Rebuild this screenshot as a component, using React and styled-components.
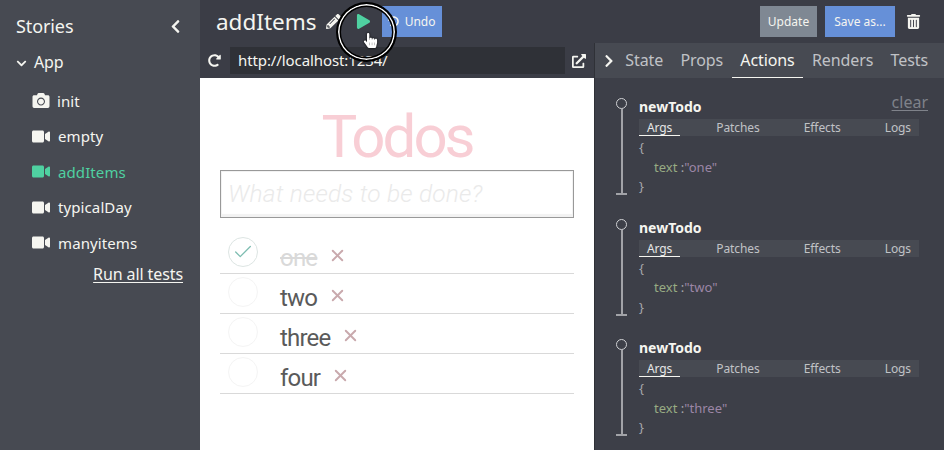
import React from 'react'
import styled, { createGlobalStyle } from 'styled-components'
import {
  FaCamera, FaVideo, FaChevronLeft, FaChevronRight, FaChevronDown, FaPlay,
  FaPencilAlt, FaUndo, FaRedoAlt, FaExternalLinkAlt, FaTrashAlt, FaHandPointer,
} from 'react-icons/fa'
import { Check, X } from 'lucide-react'

const GlobalStyle = createGlobalStyle`
  html, body { margin: 0; padding: 0; height: 100%; overflow: hidden; }
  body { font-family: "Noto Sans", "Open Sans", sans-serif; background: #3d3f48; }
  * { box-sizing: border-box; }
`

const Page = styled.div`
  position: relative;
  display: flex;
  width: 944px;
  height: 450px;
  overflow: hidden;
`

const Sidebar = styled.aside`
  flex: 0 0 200px;
  background: #474a52;
  color: #f5f5f0;
  padding: 13px 17px 0 16px;
`

const SideHead = styled.div`
  display: flex;
  justify-content: space-between;
  align-items: center;
  height: 26px;
  font-size: 18px;
  letter-spacing: -0.1px;
`

const TreeRoot = styled.div`
  display: flex;
  align-items: center;
  gap: 7px;
  margin-top: 10px;
  height: 26px;
  font-size: 16px;
  letter-spacing: -0.2px;
  svg { font-size: 11px; margin-top: 3px; }
`

const StoryList = styled.ul`
  list-style: none;
  margin: 8px 0 0;
  padding: 0 0 0 16px;
`

const Story = styled.li`
  display: flex;
  align-items: center;
  gap: ${p => (p.$photo ? '7px' : '8px')};
  height: 35.5px;
  font-size: 15px;
  letter-spacing: 0.1px;
  color: ${p => (p.$active ? '#4fd1a1' : '#f5f5f0')};
  svg { font-size: 17px; width: 18px; }
`

const RunAll = styled.a`
  display: block;
  text-align: right;
  font-size: 16px;
  letter-spacing: -0.1px;
  line-height: 18px;
  text-decoration: underline;
  text-underline-offset: 2px;
  margin-top: 4px;
`

const Main = styled.main`
  flex: 1;
  display: flex;
  flex-direction: column;
  min-width: 0;
`

const TopBar = styled.header`
  flex: 0 0 43px;
  display: flex;
  align-items: center;
  padding: 0 23px 0 16px;
  background: #3b3d46;
  color: #f5f5f0;
`

const Title = styled.h1`
  margin: 0 9px 0 0;
  font-size: 22.5px;
  font-weight: 400;
`

const IconSlot = styled.span`
  display: flex;
  align-items: center;
  justify-content: center;
  color: ${p => p.$color || '#f5f5f0'};
  font-size: ${p => p.$size || 14}px;
  margin: ${p => p.$margin || 0};
`

const Button = styled.button`
  display: flex;
  align-items: center;
  justify-content: center;
  gap: 6px;
  width: ${p => p.$width}px;
  height: 31px;
  margin-left: ${p => p.$gap || 0}px;
  border: 0;
  padding: 0;
  font: inherit;
  font-size: 12px;
  color: #f5f5f0;
  background: ${p => p.$bg};
`

const Spacer = styled.div`
  flex: 1;
`

const Workspace = styled.div`
  flex: 1;
  display: flex;
  min-height: 0;
`

const PreviewColumn = styled.section`
  flex: 0 0 394px;
  display: flex;
  flex-direction: column;
`

const AddressBar = styled.div`
  flex: 0 0 35px;
  display: flex;
  align-items: center;
  padding: 0 8px;
  background: #3b3d46;
  color: #f5f5f0;
`

const UrlField = styled.div`
  flex: 1;
  height: 27px;
  margin: 0 7px 0 9px;
  padding: 0 8px;
  line-height: 27px;
  font-size: 15px;
  letter-spacing: -0.1px;
  background: #2f3137;
`

const Preview = styled.div`
  flex: 1;
  background: #fff;
  padding: 26px 20px 0;
`

const TodoTitle = styled.h2`
  margin: 0;
  text-align: center;
  font-family: Roboto, sans-serif;
  font-weight: 400;
  font-size: 60px;
  letter-spacing: -3px;
  line-height: 66px;
  color: #f8ced5;
`

const TodoInput = styled.div`
  height: 48px;
  margin-bottom: 16px;
  padding: 0 7px;
  border: 1px solid #999;
  box-shadow: inset 0 -3px 1px #f2f2f2, inset 0 0 0 1px #f2f2f2;
  line-height: 46px;
  font-family: Roboto, sans-serif;
  font-style: italic;
  font-weight: 300;
  font-size: 24.5px;
  letter-spacing: 0.2px;
  color: #eaeaea;
`

const TodoRow = styled.div`
  display: flex;
  align-items: center;
  height: 40px;
  padding-left: 8px;
  border-bottom: 1px solid #d9d9d9;
  font-family: Roboto, sans-serif;
  font-size: 24px;
  letter-spacing: -0.8px;
  color: ${p => (p.$done ? '#d9d9d9' : '#5a5a5a')};
`

const Circle = styled.span`
  display: flex;
  align-items: center;
  justify-content: center;
  flex: 0 0 30px;
  height: 30px;
  margin: -4px 22px 0 0;
  border-radius: 50%;
  border: 1px solid ${p => (p.$done ? '#dde5e3' : '#f4f4f4')};
  color: #7ebdb1;
`

const TodoText = styled.span`
  text-decoration: ${p => (p.$done ? 'line-through' : 'none')};
  margin-top: 8px;
`

const Remove = styled.span`
  display: flex;
  color: #c9a9ad;
  margin: 3px 0 0 11px;
`

const Inspector = styled.section`
  flex: 1;
  display: flex;
  flex-direction: column;
  min-width: 0;
  border-left: 1px solid #2f3137;
  background: #3d3f48;
  color: #f5f5f0;
`

const TabBar = styled.nav`
  flex: 0 0 35px;
  display: flex;
  align-items: stretch;
  justify-content: space-between;
  padding: 0 8px 0 7px;
  background: #474a52;
  font-size: 16px;
`

const Tab = styled.span`
  display: flex;
  align-items: center;
  padding: 0 8px;
  letter-spacing: -0.1px;
  color: ${p => (p.$active ? '#f5f5f0' : '#c0c2c6')};
  border-bottom: 1px solid ${p => (p.$active ? '#f5f5f0' : 'transparent')};
`

const ActionLog = styled.div`
  position: relative;
  flex: 1;
  min-height: 0;
  padding: 20px 25px 0 21px;
`

const ClearLink = styled.a`
  position: absolute;
  top: 13px;
  right: 16px;
  font-size: 16px;
  color: #7f828a;
  text-decoration: underline;
  text-underline-offset: 2px;
`

const ActionItem = styled.article`
  display: flex;
  gap: 12px;
  height: 120.5px;
`

const Timeline = styled.div`
  display: flex;
  flex-direction: column;
  align-items: center;
  flex: 0 0 11px;
  height: 97px;
  border-bottom: 2px solid #a2a3a8;
`

const Dot = styled.span`
  flex: 0 0 11px;
  border-radius: 50%;
  width: 11px;
  border: 1px solid #d0d1d4;
`

const Stem = styled.span`
  flex: 1;
  width: 2px;
  background: #a2a3a8;
`

const ActionBody = styled.div`
  flex: 1;
  min-width: 0;
`

const ActionName = styled.div`
  font-size: 14px;
  font-weight: 700;
  line-height: 18px;
`

const SubTabs = styled.div`
  display: flex;
  justify-content: space-between;
  height: 17px;
  margin-top: 3px;
  background: #474a52;
  font-size: 12px;
  line-height: 17px;
  letter-spacing: -0.1px;
  color: #c0c2c6;
`

const SubTab = styled.span`
  padding: 0 8px;
  color: ${p => (p.$active ? '#e6e6e6' : '#c0c2c6')};
  border-bottom: 1px solid ${p => (p.$active ? '#f5f5f0' : 'transparent')};
`

const Json = styled.div`
  margin-top: 2px;
  font-size: 13px;
  line-height: 19.5px;
  color: #a6a7ab;
`

const JsonLine = styled.div`
  padding-left: ${p => (p.$indent ? '15px' : 0)};
`

const JsonKey = styled.span`
  color: #97ab83;
`

const JsonValue = styled.span`
  color: #9c86a6;
`

const Ring = styled.div`
  position: absolute;
  left: 336px;
  top: 2px;
  width: 61px;
  height: 60px;
  border-radius: 50%;
  border: 2px solid #000;
  box-shadow: inset 0 0 0 1.5px #fff, inset 0 0 0 3px #000;
  pointer-events: none;
`

const Pointer = styled.span`
  position: absolute;
  left: 363px;
  top: 33px;
  display: flex;
  font-size: 15px;
  color: #fff;
  filter: drop-shadow(0 0 1px #000);
`

const stories = [
  { name: 'init', photo: true },
  { name: 'empty' },
  { name: 'addItems', active: true },
  { name: 'typicalDay' },
  { name: 'manyitems' },
]

const todos = [
  { text: 'one', done: true },
  { text: 'two' },
  { text: 'three' },
  { text: 'four' },
]

export default function App() {
  return (
    <Page>
      <GlobalStyle />
      <Sidebar>
        <SideHead>
          Stories
          <FaChevronLeft size={15} />
        </SideHead>
        <TreeRoot>
          <FaChevronDown />
          App
        </TreeRoot>
        <StoryList>
          {stories.map(s => (
            <Story key={s.name} $active={s.active} $photo={s.photo}>
              {s.photo ? <FaCamera /> : <FaVideo />}
              {s.name}
            </Story>
          ))}
        </StoryList>
        <RunAll>Run all tests</RunAll>
      </Sidebar>

      <Main>
        <TopBar>
          <Title>addItems</Title>
          <IconSlot $size={15}><FaPencilAlt /></IconSlot>
          <IconSlot $size={15} $color="#4fd1a1" $margin="0 11px 0 15px"><FaPlay /></IconSlot>
          <Button $bg="#6690d8" $width={60}><FaUndo size={11} />Undo</Button>
          <Spacer />
          <Button $bg="#7f8893" $width={57}>Update</Button>
          <Button $bg="#6690d8" $width={70} $gap={8}>Save as...</Button>
          <IconSlot $size={15} $margin="0 0 0 11px"><FaTrashAlt /></IconSlot>
        </TopBar>
        <Workspace>
          <PreviewColumn>
            <AddressBar>
              <FaRedoAlt size={13} />
              <UrlField>http://localhost:1234/</UrlField>
              <FaExternalLinkAlt size={14} />
            </AddressBar>
            <Preview>
              <TodoTitle>Todos</TodoTitle>
              <TodoInput>What needs to be done?</TodoInput>
              {todos.map(t => (
                <TodoRow key={t.text} $done={t.done}>
                  <Circle $done={t.done}>{t.done && <Check size={22} strokeWidth={1.4} />}</Circle>
                  <TodoText $done={t.done}>{t.text}</TodoText>
                  <Remove><X size={19} strokeWidth={2.4} /></Remove>
                </TodoRow>
              ))}
            </Preview>
          </PreviewColumn>
          <Inspector>
            <TabBar>
              <IconSlot $size={14}><FaChevronRight /></IconSlot>
              <Tab>State</Tab>
              <Tab>Props</Tab>
              <Tab $active>Actions</Tab>
              <Tab>Renders</Tab>
              <Tab>Tests</Tab>
            </TabBar>
            <ActionLog>
              <ClearLink>clear</ClearLink>
              {['one', 'two', 'three'].map(v => (
                <ActionItem key={v}>
                  <Timeline>
                    <Dot />
                    <Stem />
                  </Timeline>
                  <ActionBody>
                    <ActionName>newTodo</ActionName>
                    <SubTabs>
                      <SubTab $active>Args</SubTab>
                      <SubTab>Patches</SubTab>
                      <SubTab>Effects</SubTab>
                      <SubTab>Logs</SubTab>
                    </SubTabs>
                    <Json>
                      <JsonLine>{'{'}</JsonLine>
                      <JsonLine $indent><JsonKey>text</JsonKey> :<JsonValue>"{v}"</JsonValue></JsonLine>
                      <JsonLine>{'}'}</JsonLine>
                    </Json>
                  </ActionBody>
                </ActionItem>
              ))}
            </ActionLog>
          </Inspector>
        </Workspace>
      </Main>

      <Ring />
      <Pointer><FaHandPointer /></Pointer>
    </Page>
  )
}
